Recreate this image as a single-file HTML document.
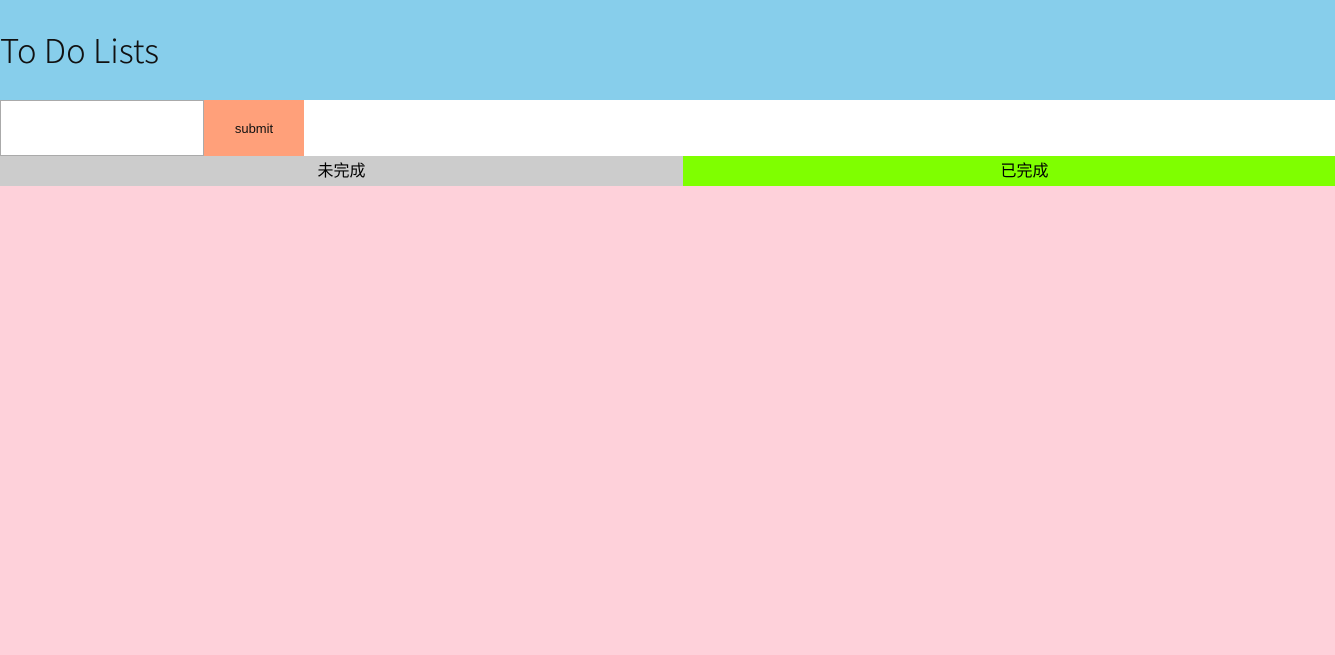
<!DOCTYPE html>
<html><head><meta charset="utf-8"><style>
*{margin:0;padding:0;box-sizing:border-box}
body{width:1335px;height:655px;background:#fed1da;font-family:"Liberation Sans","Noto Sans CJK SC",sans-serif;overflow:hidden}
.h{height:100px;background:#87ceeb;position:relative}
.h h1{position:absolute;left:0;top:29px;font-size:33px;line-height:40px;color:#111;font-family:"Noto Sans CJK SC","Liberation Sans",sans-serif;font-weight:300}
.f{height:56px;background:#fff;position:relative}
.in{position:absolute;left:0;top:0;width:204px;height:56px;border:1px solid #aaa;background:#fff}
.bt{position:absolute;left:204px;top:0;width:100px;height:56px;background:#ffa07a;font-size:13px;text-align:center;line-height:57px;color:#111}
.t{height:30px;position:relative;overflow:hidden;background:#7fff00}
.t div{position:absolute;top:0;width:683px;text-align:center;line-height:32px;font-size:16px;color:#000}
.a{left:0;background:#ccc}.b{left:683px}
</style></head><body>
<div class="h"><h1>To Do Lists</h1></div>
<div class="f"><div class="in"></div><div class="bt">submit</div></div>
<div class="t"><div class="a">未完成</div><div class="b">已完成</div></div>
</body></html>
